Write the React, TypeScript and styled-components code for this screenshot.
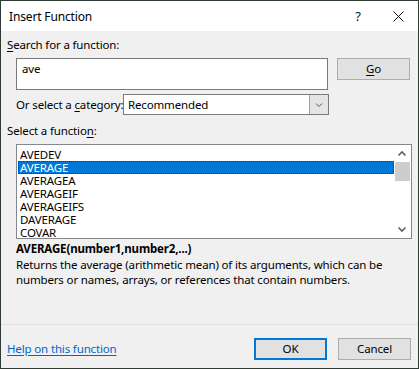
import styled, { createGlobalStyle } from 'styled-components';

const GlobalStyle = createGlobalStyle`
  html, body {
    margin: 0;
    padding: 0;
    background: #ffffff;
  }
  * {
    box-sizing: border-box;
  }
`;

const font = `"Segoe UI", "Noto Sans", "Open Sans", sans-serif`;

const Dialog = styled.div`
  width: 419px;
  height: 369px;
  border: 1px solid #2f3b35;
  background: #f0f0f0;
  font-family: ${font};
  font-size: 11.5px;
  letter-spacing: -0.15px;
  color: #000;
  display: flex;
  flex-direction: column;
`;

const TitleBar = styled.div`
  height: 30px;
  background: #ffffff;
  display: flex;
  align-items: center;
  padding-left: 8px;
`;

const Title = styled.div`
  flex: 1;
  font-size: 12px;
`;

const TitleButton = styled.div<{ $width: number }>`
  width: ${({ $width }) => $width}px;
  height: 30px;
  display: flex;
  align-items: center;
  justify-content: center;
  font-size: 13px;
  color: #111;
`;

const Body = styled.div`
  flex: 1;
  padding: 5px 7px 0 6px;
  display: flex;
  flex-direction: column;
`;

const Label = styled.div<{ $top?: number }>`
  line-height: 16px;
  margin-top: ${({ $top }) => $top ?? 0}px;
  white-space: nowrap;
`;

const Key = styled.span`
  text-decoration: underline;
  text-underline-offset: 2px;
`;

const SearchRow = styled.div`
  display: flex;
  align-items: flex-start;
  margin-top: 5px;
  padding-left: 9px;
  gap: 9px;
`;

const SearchBox = styled.div`
  width: 312px;
  height: 32px;
  background: #ffffff;
  border: 1px solid #7a7a7a;
  padding: 2px 5px;
  line-height: 16px;
`;

const Button = styled.div<{ $default?: boolean }>`
  width: 73px;
  height: 22px;
  background: #e1e1e1;
  border: ${({ $default }) => ($default ? '2px solid #0078d7' : '1px solid #adadad')};
  display: flex;
  align-items: center;
  justify-content: center;
  line-height: 16px;
`;

const CategoryRow = styled.div`
  display: flex;
  align-items: center;
  margin-top: 4px;
  padding-left: 9px;
  gap: 2px;
`;

const CategoryLabel = styled(Label)`
  width: 105px;
`;

const Select = styled.div`
  width: 206px;
  height: 21px;
  background: #ffffff;
  border: 1px solid #7a7a7a;
  display: flex;
  align-items: center;
`;

const SelectValue = styled.div`
  flex: 1;
  padding-left: 4px;
  line-height: 16px;
`;

const SelectArrow = styled.div`
  width: 19px;
  height: 19px;
  background: #e5e5e5;
  border-left: 1px solid #a0a0a0;
  display: flex;
  align-items: center;
  justify-content: center;
`;

const ListBox = styled.div`
  margin: 5px 0 0 9px;
  width: 396px;
  height: 95px;
  background: #ffffff;
  border: 1px solid #828790;
  display: flex;
  padding: 1px;
`;

const Items = styled.div`
  flex: 1;
  display: flex;
  flex-direction: column;
  padding-top: 2px;
`;

const Item = styled.div<{ $selected?: boolean }>`
  height: 13px;
  line-height: 13px;
  padding-left: 2px;
  background: ${({ $selected }) => ($selected ? '#0078d7' : 'transparent')};
  color: ${({ $selected }) => ($selected ? '#ffffff' : '#000')};
  outline: ${({ $selected }) => ($selected ? '1px dotted #1a3a5a' : 'none')};
  outline-offset: -1px;
`;

const ScrollBar = styled.div`
  width: 16px;
  background: #ffffff;
  display: flex;
  flex-direction: column;
  align-items: center;
`;

const ScrollBtn = styled.div`
  height: 16px;
  width: 16px;
  display: flex;
  align-items: center;
  justify-content: center;
`;

const Thumb = styled.div`
  width: 15px;
  height: 19px;
  background: #cdcdcd;
`;

const Track = styled.div`
  flex: 1;
`;

const Signature = styled.div`
  margin: 2px 0 0 9px;
  font-weight: 700;
  line-height: 16px;
`;

const Description = styled.div`
  margin: 0 0 0 9px;
  line-height: 15px;
  width: 380px;
`;

const Separator = styled.div`
  margin-top: auto;
  height: 1px;
  background: #dfdfdf;
`;

const Footer = styled.div`
  height: 43px;
  display: flex;
  align-items: center;
  padding: 4px 7px 0 6px;
  gap: 11px;
`;

const HelpLink = styled.a`
  flex: 1;
  color: #0066cc;
  text-decoration: underline;
  text-underline-offset: 2px;
  line-height: 16px;
`;

const ChevronDown = ({ color, size }: { color: string; size: number }) => (
  <svg width={size} height={size} viewBox="0 0 10 10">
    <path d="M2 3.5 L5 6.5 L8 3.5" fill="none" stroke={color} strokeWidth="1" />
  </svg>
);

const ChevronBold = ({ up }: { up?: boolean }) => (
  <svg width="10" height="10" viewBox="0 0 10 10">
    <path
      d={up ? 'M1.5 6.5 L5 3 L8.5 6.5' : 'M1.5 3.5 L5 7 L8.5 3.5'}
      fill="none"
      stroke="#606060"
      strokeWidth="1.6"
    />
  </svg>
);

const functions = ['AVEDEV', 'AVERAGE', 'AVERAGEA', 'AVERAGEIF', 'AVERAGEIFS', 'DAVERAGE', 'COVAR'];

export default function App() {
  return (
    <>
      <GlobalStyle />
      <Dialog>
        <TitleBar>
          <Title>Insert Function</Title>
          <TitleButton $width={40}>?</TitleButton>
          <TitleButton $width={40}>
            <svg width="11" height="11" viewBox="0 0 11 11">
              <path d="M0.5 0.5 L10.5 10.5 M10.5 0.5 L0.5 10.5" stroke="#111" strokeWidth="1" />
            </svg>
          </TitleButton>
        </TitleBar>
        <Body>
          <Label $top={1}>
            <Key>S</Key>earch for a function:
          </Label>
          <SearchRow>
            <SearchBox>ave</SearchBox>
            <Button>
              <Key>G</Key>o
            </Button>
          </SearchRow>
          <CategoryRow>
            <CategoryLabel>
              Or select a <Key>c</Key>ategory:
            </CategoryLabel>
            <Select>
              <SelectValue>Recommended</SelectValue>
              <SelectArrow>
                <ChevronDown color="#555" size={10} />
              </SelectArrow>
            </Select>
          </CategoryRow>
          <Label $top={8}>
            Select a functio<Key>n</Key>:
          </Label>
          <ListBox>
            <Items>
              {functions.map((f) => (
                <Item key={f} $selected={f === 'AVERAGE'}>
                  {f}
                </Item>
              ))}
            </Items>
            <ScrollBar>
              <ScrollBtn>
                <ChevronBold up />
              </ScrollBtn>
              <Thumb />
              <Track />
              <ScrollBtn>
                <ChevronBold />
              </ScrollBtn>
            </ScrollBar>
          </ListBox>
          <Signature>AVERAGE(number1,number2,...)</Signature>
          <Description>
            Returns the average (arithmetic mean) of its arguments, which can be numbers or names, arrays, or
            references that contain numbers.
          </Description>
        </Body>
        <Separator />
        <Footer>
          <HelpLink>Help on this function</HelpLink>
          <Button $default>OK</Button>
          <Button>Cancel</Button>
        </Footer>
      </Dialog>
    </>
  );
}
